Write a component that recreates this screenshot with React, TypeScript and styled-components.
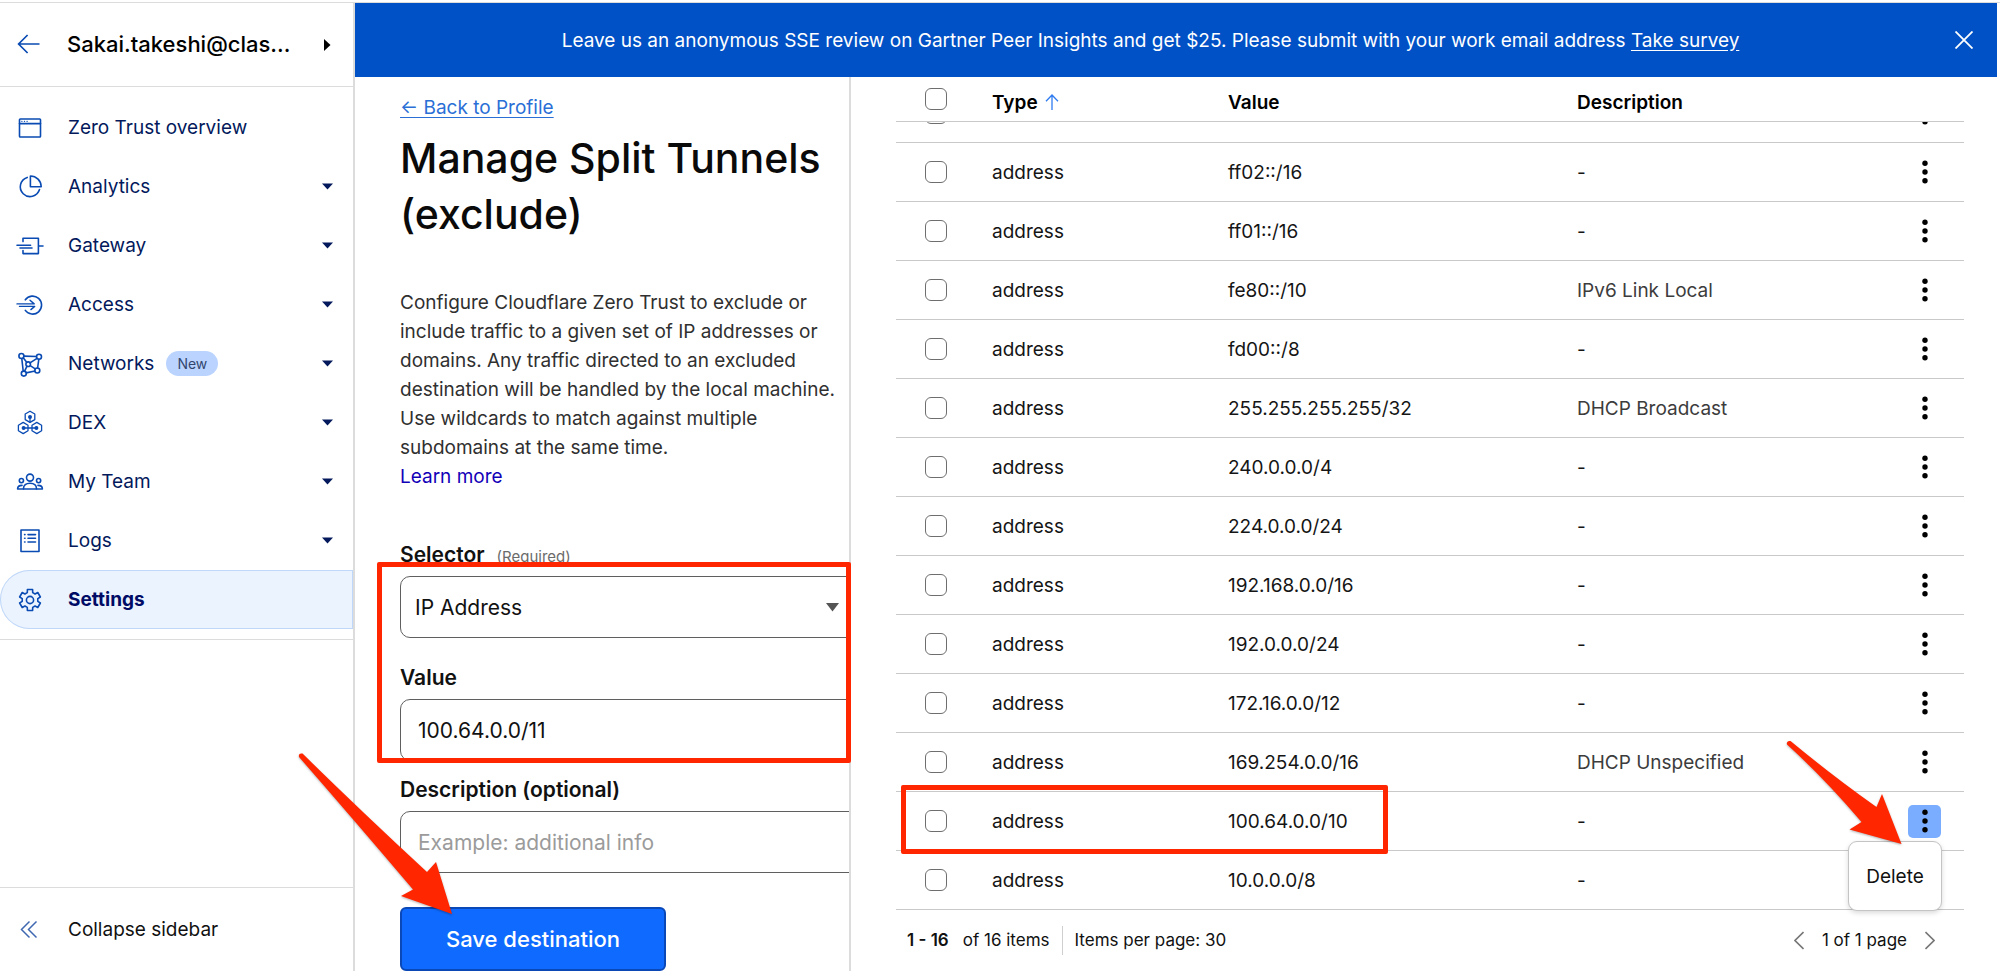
import React, { useLayoutEffect, useRef, useState } from "react";
import styled, { createGlobalStyle, css } from "styled-components";

const color = {
  line: "#c9c9c9",
  frame: "#dcdcdc",
  navy: "#03195c",
  icon: "#0a4bb3",
  banner: "#0051c6",
  action: "#0f6bff",
  mark: "#ff2600",
};

const GlobalStyle = createGlobalStyle`
  *, *::before, *::after { box-sizing: border-box; }
  html, body { margin: 0; background: #fff; }
  body, button, input, select {
    font-family: Inter, "Liberation Sans", sans-serif;
    font-size: 19px;
    line-height: 29px;
    color: #111;
  }
`;

/* ---------- shell ---------- */

const Shell = styled.div`
  display: flex;
  height: 100vh;
  overflow: hidden;
  padding-top: 2px;
`;

const Sidebar = styled.aside`
  display: flex;
  flex-direction: column;
  flex: 0 0 355px;
  border-top: 1px solid ${color.frame};
  border-right: 2px solid ${color.frame};
`;

const Main = styled.main`
  display: flex;
  flex-direction: column;
  flex: 1;
  min-width: 0;
  border-top: 1px solid ${color.frame};
`;

const Split = styled.div`
  display: grid;
  grid-template-columns: 496px minmax(0, 1fr);
  flex: 1;
  min-height: 0;
`;

/* ---------- sidebar ---------- */

const AccountBar = styled.header`
  display: flex;
  align-items: center;
  height: 84px;
  padding: 0 22px 0 17px;
  border-bottom: 1px solid ${color.frame};
`;

const IconButton = styled.button`
  display: flex;
  align-items: center;
  justify-content: center;
  padding: 0;
  border: 0;
  background: none;
  cursor: pointer;
`;

const AccountName = styled.button`
  display: flex;
  align-items: center;
  justify-content: space-between;
  flex: 1;
  margin-left: 24px;
  padding: 0;
  border: 0;
  background: none;
  font-size: 22px;
  font-weight: 500;
  text-align: left;
  color: #000;
`;

const NavList = styled.nav`
  display: flex;
  flex-direction: column;
  padding: 11px 0 10px;
  border-bottom: 1px solid ${color.frame};
`;

const NavLink = styled.a<{ $active?: boolean }>`
  display: flex;
  align-items: center;
  height: 59px;
  padding: 0 20px 0 17px;
  color: ${color.navy};
  text-decoration: none;
  ${(p) =>
    p.$active &&
    css`
      font-weight: 700;
      color: #000b66;
      background: #ebf3fe;
      border-radius: 30px 0 0 30px;
      box-shadow: inset 0 0 0 1px #bfd7f8;
    `}
`;

const NavText = styled.span`
  margin-left: 25px;
`;

const Badge = styled.span`
  margin-left: 12px;
  padding: 0 11px;
  border-radius: 13px;
  background: #bad4ff;
  color: #33466e;
  font-size: 14px;
  line-height: 25px;
`;

const CaretSlot = styled.span`
  display: flex;
  margin-left: auto;
`;

const CollapseButton = styled.button`
  display: flex;
  align-items: center;
  height: 84px;
  margin-top: auto;
  padding: 0 17px;
  border: 0;
  border-top: 1px solid ${color.frame};
  background: none;
  text-align: left;
`;

/* ---------- banner ---------- */

const Banner = styled.div`
  display: flex;
  align-items: center;
  height: 74px;
  margin-right: 3px;
  padding-right: 15px;
  background: ${color.banner};
  color: #fff;
`;

const BannerText = styled.p`
  flex: 1;
  margin: 0;
  text-align: center;
`;

const BannerLink = styled.a`
  color: inherit;
  text-underline-offset: 3px;
`;

const CloseButton = styled(IconButton)`
  width: 36px;
  height: 36px;
`;

/* ---------- form column ---------- */

const FormColumn = styled.section`
  position: relative;
  min-width: 0;
  min-height: 0;
  border-right: 2px solid ${color.frame};
`;

const FormScroll = styled.div`
  height: 100%;
  overflow: hidden;
  padding: 16px 0 0 45px;
`;

const BackLink = styled.a`
  display: inline-block;
  color: #2a6fd6;
  text-underline-offset: 3px;
`;

const Title = styled.h1`
  margin: 8px 0 0;
  font-size: 41px;
  font-weight: 500;
  line-height: 56px;
  color: #0a0a0a;
`;

const Intro = styled.p`
  margin: 46px 0 0;
  color: #303030;
`;

const LearnMore = styled.a`
  display: block;
  color: #1200b8;
  text-decoration: none;
`;

const Form = styled.form`
  display: flex;
  flex-direction: column;
  align-items: flex-start;
  padding-top: 49px;
`;

const Field = styled.div<{ $gap: number }>`
  width: calc(100% + 24px);
  margin-bottom: ${(p) => p.$gap}px;
`;

const Label = styled.label`
  display: block;
  margin-bottom: 6px;
  font-size: 21px;
  font-weight: 600;
  line-height: 30px;
`;

const Required = styled.span`
  margin-left: 12px;
  font-size: 15px;
  font-weight: 400;
  line-height: 20px;
  color: #6b6b6b;
`;

const controlLook = css`
  display: block;
  width: 100%;
  height: 62px;
  border: 1px solid #5f5f5f;
  border-radius: 10px;
  background: #fff;
  font-size: 21px;
`;

const TextInput = styled.input`
  ${controlLook}
  padding: 0 17px;
  &::placeholder {
    color: #9b9b9b;
    opacity: 1;
  }
`;

const SelectWrap = styled.div`
  position: relative;
`;

const Select = styled.select`
  ${controlLook}
  appearance: none;
  padding: 0 14px;
`;

const SelectCaret = styled.svg`
  position: absolute;
  top: 27px;
  right: 34px;
  pointer-events: none;
`;

const SaveButton = styled.button`
  height: 64px;
  padding: 0 44px;
  border: 2px solid #0a48b8;
  border-radius: 6px;
  background: ${color.action};
  color: #fff;
  font-size: 22px;
  font-weight: 500;
`;

/* ---------- table pane ---------- */

const TablePane = styled.section`
  position: relative;
  display: flex;
  flex-direction: column;
  min-width: 0;
  min-height: 0;
  padding: 0 36px 0 45px;
`;

const Table = styled.table`
  display: flex;
  flex-direction: column;
  flex: 1;
  min-height: 0;
`;

const TableHead = styled.thead`
  display: block;
`;

const TableBody = styled.tbody`
  display: block;
  flex: 1;
  min-height: 0;
  overflow-y: auto;
  scrollbar-width: none;
`;

const Row = styled.tr`
  display: grid;
  grid-template-columns: 96px 236fr 349fr 307fr 80px;
  height: 59px;
  border-bottom: 1px solid ${color.line};
`;

const HeadRow = styled(Row)`
  height: 45px;
`;

const HeadCell = styled.th`
  display: flex;
  align-items: center;
  gap: 7px;
  padding: 6px 0 0;
  font-weight: 600;
  color: #000;
`;

const HeadCheckCell = styled(HeadCell)`
  padding: 0;
`;

const Cell = styled.td<{ $soft?: boolean }>`
  display: flex;
  align-items: center;
  padding: 0;
  color: ${(p) => (p.$soft ? "#3c3c3c" : "#151515")};
`;

const Checkbox = styled.input`
  appearance: none;
  display: block;
  width: 22px;
  height: 22px;
  margin: 0 0 0 29px;
  border: 1px solid #6e6e6e;
  border-radius: 6px;
  background: #fff;
`;

const KebabButton = styled(IconButton)<{ $open: boolean }>`
  width: 33px;
  height: 33px;
  margin-left: 24px;
  border-radius: 5px;
  background: ${(p) => (p.$open ? "#7aadff" : "none")};
`;

const Menu = styled.div`
  position: absolute;
  right: 58px;
  bottom: 60px;
  z-index: 2;
  display: flex;
  align-items: center;
  justify-content: center;
  width: 94px;
  height: 70px;
  border: 1px solid #c4c4c4;
  border-radius: 9px;
  background: #fff;
  box-shadow: 0 2px 5px rgba(0, 0, 0, 0.15);
`;

const MenuItem = styled.button`
  padding: 0;
  border: 0;
  background: none;
`;

const Footer = styled.footer`
  display: flex;
  align-items: center;
  height: 61px;
  padding: 0 29px 0 11px;
  font-size: 17px;
`;

const Range = styled.strong`
  margin-right: 14px;
  font-weight: 600;
`;

const PerPage = styled.span`
  margin-left: 12px;
  padding-left: 12px;
  border-left: 1px solid #cfcfcf;
`;

const Pager = styled.div`
  display: flex;
  align-items: center;
  gap: 18px;
  margin-left: auto;
`;

/* ---------- annotations laid over the content ---------- */

const markBox = css`
  position: absolute;
  z-index: 3;
  border: 5px solid ${color.mark};
  border-radius: 2px;
  pointer-events: none;
`;

const FieldsMark = styled.div`
  ${markBox}
  top: 485px;
  left: 22px;
  right: -2px;
  height: 201px;
`;

const RowMark = styled.div`
  ${markBox}
  left: 50px;
  bottom: 117px;
  width: 487px;
  height: 69px;
`;

const arrowLook = css`
  position: absolute;
  z-index: 4;
  overflow: visible;
  pointer-events: none;
  filter: drop-shadow(0 1px 1px rgba(0, 0, 0, 0.3));
`;

const SaveArrow = styled.svg`
  ${arrowLook}
  top: 675px;
  left: -57px;
`;

const DeleteArrow = styled.svg`
  ${arrowLook}
  right: 98px;
  bottom: 126px;
`;

/* ---------- icons ---------- */

function NavIcon({ children }: { children: React.ReactNode }) {
  return (
    <svg
      width="26"
      height="26"
      viewBox="0 0 26 26"
      fill="none"
      stroke={color.icon}
      strokeWidth="1.6"
      strokeLinecap="round"
      strokeLinejoin="round"
      overflow="visible"
      aria-hidden="true"
    >
      {children}
    </svg>
  );
}

/* Six-toothed gear centred on (13, 13). */
const gearOutline = (() => {
  const pts: string[] = [];
  const at = (deg: number, r: number) => {
    const a = (deg * Math.PI) / 180;
    pts.push(`${(13 + r * Math.sin(a)).toFixed(2)} ${(13 - r * Math.cos(a)).toFixed(2)}`);
  };
  for (let k = 0; k < 6; k++) {
    const d = k * 60;
    at(d - 20, 7.9);
    at(d - 14, 10.8);
    at(d + 14, 10.8);
    at(d + 20, 7.9);
  }
  return `M${pts.join("L")}Z`;
})();

const hexagon = (x: number, y: number) =>
  `M${x} ${y - 5.6}l4.8 2.8v5.6l-4.8 2.8l-4.8 -2.8v-5.6z`;

const icons = {
  overview: (
    <>
      <rect x="2.5" y="4" width="21" height="18" rx="0.8" />
      <path d="M2.5 8.6h21" />
      <path d="M4.8 6.3h.2M7.4 6.3h.2M10 6.3h.2" strokeWidth="1.2" />
    </>
  ),
  analytics: (
    <>
      <path d="M10.2 3.4a9.8 9.8 0 1 0 12.3 12.2" />
      <path d="M13.4 2v10.8h10.8a10.8 10.8 0 0 0-10.8-10.8z" />
    </>
  ),
  gateway: (
    <>
      <path d="M6 8.6V5.2h15.4v15.4H6v-3M21.4 13H26" />
      <path d="M0 12.3h13.6M3 15h12" />
    </>
  ),
  access: (
    <>
      <path d="M8.3 7.8a9 9 0 1 1 0 10.6" />
      <path d="M0 11.9h17.2l-4.2-3.6M2.5 14.4h15.2l-3.8 3.2" strokeWidth="1.4" />
    </>
  ),
  networks: (
    <>
      <path d="M7 5.1l12.4.4M4.8 7.6l1.4 12.4M21.8 8.3l-1.2 8.6M18 20l-8.8 1.9M6.4 7l3.3 4.2M20 7.3l-7 4.6M13.2 14.6l5 3.2M10 15.1l-2.4 5.1" />
      <circle cx="4.4" cy="5" r="2.5" />
      <circle cx="22" cy="5.7" r="2.5" />
      <circle cx="11.2" cy="13.2" r="2.3" />
      <circle cx="20.3" cy="19.5" r="2.5" />
      <circle cx="6.8" cy="22.6" r="2.5" />
    </>
  ),
  dex: (
    <>
      <path d={hexagon(13, 6.8)} strokeWidth="1.3" />
      <path d={hexagon(6.2, 18)} strokeWidth="1.3" />
      <path d={hexagon(19.8, 18)} strokeWidth="1.3" />
      <path d="M6.2 18h13.6M13 7v5" strokeWidth="1.3" />
      <circle cx="13" cy="7" r="1.2" fill={color.icon} />
      <circle cx="6.6" cy="18" r="1.2" fill={color.icon} />
      <circle cx="19.4" cy="18" r="1.2" fill={color.icon} />
    </>
  ),
  team: (
    <>
      <circle cx="13" cy="8.6" r="3.5" />
      <circle cx="4.4" cy="11.6" r="2.1" />
      <circle cx="21.6" cy="11.6" r="2.1" />
      <path d="M6.4 20c0-4 2.6-5.8 6.6-5.8s6.6 1.8 6.6 5.8z" />
      <path d="M5 16.4c-3 0-4.4 1-4.4 3.6h5.8M21 16.4c3 0 4.4 1 4.4 3.6h-5.8" />
    </>
  ),
  logs: (
    <>
      <rect x="4" y="2" width="18" height="21.5" />
      <path d="M11 6.6h7.5M11 10.3h7.5M11 14h7.5M7.6 6.6h.4M7.6 10.3h.4M7.6 14h.4" />
    </>
  ),
  settings: (
    <>
      <path d={gearOutline} />
      <circle cx="13" cy="13" r="3.6" />
    </>
  ),
};

function DownCaret() {
  return (
    <svg width="11" height="7" viewBox="0 0 11 7" aria-hidden="true">
      <path d="M0 .5h11L5.5 6.5z" fill={color.navy} />
    </svg>
  );
}

function Kebab() {
  return (
    <svg width="6" height="24" viewBox="0 0 6 24" aria-hidden="true">
      <circle cx="3" cy="3.2" r="2.7" />
      <circle cx="3" cy="12" r="2.7" />
      <circle cx="3" cy="20.8" r="2.7" />
    </svg>
  );
}

function Chevron({ d }: { d: string }) {
  return (
    <svg width="10" height="19" viewBox="0 0 10 19" fill="none" stroke="#777" strokeWidth="1.6" aria-hidden="true">
      <path d={d} />
    </svg>
  );
}

/* ---------- data ---------- */

const navItems: { id: keyof typeof icons; label: string; badge?: string; caret?: boolean; active?: boolean }[] = [
  { id: "overview", label: "Zero Trust overview" },
  { id: "analytics", label: "Analytics", caret: true },
  { id: "gateway", label: "Gateway", caret: true },
  { id: "access", label: "Access", caret: true },
  { id: "networks", label: "Networks", badge: "New", caret: true },
  { id: "dex", label: "DEX", caret: true },
  { id: "team", label: "My Team", caret: true },
  { id: "logs", label: "Logs", caret: true },
  { id: "settings", label: "Settings", active: true },
];

const destinations: { value: string; description?: string }[] = [
  { value: "ff05::/16" },
  { value: "ff02::/16" },
  { value: "ff01::/16" },
  { value: "fe80::/10", description: "IPv6 Link Local" },
  { value: "fd00::/8" },
  { value: "255.255.255.255/32", description: "DHCP Broadcast" },
  { value: "240.0.0.0/4" },
  { value: "224.0.0.0/24" },
  { value: "192.168.0.0/16" },
  { value: "192.0.0.0/24" },
  { value: "172.16.0.0/12" },
  { value: "169.254.0.0/16", description: "DHCP Unspecified" },
  { value: "100.64.0.0/10" },
  { value: "10.0.0.0/8" },
];

/* ---------- sections ---------- */

function SideNavigation() {
  return (
    <Sidebar>
      <AccountBar>
        <IconButton aria-label="Back">
          <svg width="26" height="26" viewBox="0 0 26 26" fill="none" stroke={color.icon} strokeWidth="1.7">
            <path d="M22.5 12H1.8M10.6 3L1.6 12l9 9" />
          </svg>
        </IconButton>
        <AccountName>
          Sakai.takeshi@clas...
          <svg width="7" height="12" viewBox="0 0 7 12" aria-hidden="true">
            <path d="M0 0l6.5 6L0 12z" />
          </svg>
        </AccountName>
      </AccountBar>
      <NavList>
        {navItems.map((item) => (
          <NavLink key={item.id} href="#" $active={item.active}>
            <NavIcon>{icons[item.id]}</NavIcon>
            <NavText>{item.label}</NavText>
            {item.badge && <Badge>{item.badge}</Badge>}
            {item.caret && (
              <CaretSlot>
                <DownCaret />
              </CaretSlot>
            )}
          </NavLink>
        ))}
      </NavList>
      <CollapseButton>
        <svg width="26" height="26" viewBox="0 0 26 26" fill="none" stroke="#3f68b0" strokeWidth="1.5" aria-hidden="true">
          <path d="M12.5 4.5L4.5 12.5l8 8M19.5 4.5L11.5 12.5l8 8" />
        </svg>
        <NavText>Collapse sidebar</NavText>
      </CollapseButton>
    </Sidebar>
  );
}

function SurveyBanner() {
  return (
    <Banner>
      <BannerText>
        Leave us an anonymous SSE review on Gartner Peer Insights and get $25. Please submit with your work email
        address <BannerLink href="#">Take survey</BannerLink>
      </BannerText>
      <CloseButton aria-label="Close">
        <svg width="18" height="18" viewBox="0 0 18 18" fill="none" stroke="#fff" strokeWidth="1.8">
          <path d="M.5.5l17 17M17.5.5l-17 17" />
        </svg>
      </CloseButton>
    </Banner>
  );
}

function DestinationForm() {
  const [value, setValue] = useState("100.64.0.0/11");
  return (
    <FormColumn>
      <FormScroll>
        <BackLink href="#">← Back to Profile</BackLink>
        <Title>Manage Split Tunnels (exclude)</Title>
        <Intro>
          Configure Cloudflare Zero Trust to exclude or include traffic to a given set of IP addresses or domains. Any
          traffic directed to an excluded destination will be handled by the local machine. Use wildcards to match
          against multiple subdomains at the same time.
          <LearnMore href="#">Learn more</LearnMore>
        </Intro>
        <Form onSubmit={(e) => e.preventDefault()}>
          <Field $gap={25}>
            <Label htmlFor="selector">
              Selector<Required>(Required)</Required>
            </Label>
            <SelectWrap>
              <Select id="selector">
                <option>IP Address</option>
              </Select>
              <SelectCaret width="13" height="9" viewBox="0 0 13 9" aria-hidden="true">
                <path d="M0 0h13L6.5 8.5z" fill="#555" />
              </SelectCaret>
            </SelectWrap>
          </Field>
          <Field $gap={14}>
            <Label htmlFor="value">Value</Label>
            <TextInput id="value" value={value} onChange={(e) => setValue(e.target.value)} />
          </Field>
          <Field $gap={34}>
            <Label htmlFor="description">Description (optional)</Label>
            <TextInput id="description" placeholder="Example: additional info" />
          </Field>
          <SaveButton type="submit">Save destination</SaveButton>
        </Form>
      </FormScroll>
      <FieldsMark />
      <SaveArrow width="156" height="164" viewBox="0 0 156 164" aria-hidden="true">
        <path
          d="M.8 3.8Q1 .8 4.5 1.6Q64 60 129 120L138 110L154 162L103 144L115 137.5Q56 68 1 5Z"
          fill={color.mark}
        />
      </SaveArrow>
    </FormColumn>
  );
}

function DestinationTable() {
  const body = useRef<HTMLTableSectionElement>(null);
  const openRow = "100.64.0.0/10";

  useLayoutEffect(() => {
    const el = body.current;
    if (el) el.scrollTop = el.scrollHeight;
  }, []);

  return (
    <TablePane>
      <Table>
        <TableHead>
          <HeadRow>
            <HeadCheckCell>
              <Checkbox type="checkbox" aria-label="Select all" />
            </HeadCheckCell>
            <HeadCell>
              Type
              <svg
                width="14"
                height="16"
                viewBox="0 0 14 16"
                fill="none"
                stroke="#2f7bf0"
                strokeWidth="1.3"
                aria-hidden="true"
              >
                <path d="M7 16V1M1 7.2L7 1l6 6.2" />
              </svg>
            </HeadCell>
            <HeadCell>Value</HeadCell>
            <HeadCell>Description</HeadCell>
            <HeadCell />
          </HeadRow>
        </TableHead>
        <TableBody ref={body}>
          {destinations.map((row) => (
            <Row key={row.value}>
              <Cell>
                <Checkbox type="checkbox" aria-label={`Select ${row.value}`} />
              </Cell>
              <Cell>address</Cell>
              <Cell>{row.value}</Cell>
              <Cell $soft={Boolean(row.description)}>{row.description ?? "-"}</Cell>
              <Cell>
                <KebabButton $open={row.value === openRow} aria-label={`Actions for ${row.value}`}>
                  <Kebab />
                </KebabButton>
              </Cell>
            </Row>
          ))}
        </TableBody>
      </Table>
      <Footer>
        <Range>1 - 16</Range>
        <span>of 16 items</span>
        <PerPage>Items per page: 30</PerPage>
        <Pager>
          <IconButton aria-label="Previous page">
            <Chevron d="M9.5 1L1 9.5l8.5 8.5" />
          </IconButton>
          <span>1 of 1 page</span>
          <IconButton aria-label="Next page">
            <Chevron d="M.5 1L9 9.5L.5 18" />
          </IconButton>
        </Pager>
      </Footer>
      <Menu>
        <MenuItem>Delete</MenuItem>
      </Menu>
      <RowMark />
      <DeleteArrow width="116" height="105" viewBox="0 0 116 105" aria-hidden="true">
        <path
          d="M.8 3.6Q1 .4 4.5 1Q48 37 90.500 67L96 54L115.500 104L63.500 89.500L75.500 82Q38 38 1 4.500Z"
          fill={color.mark}
        />
      </DeleteArrow>
    </TablePane>
  );
}

export default function App() {
  return (
    <>
      <GlobalStyle />
      <Shell>
        <SideNavigation />
        <Main>
          <SurveyBanner />
          <Split>
            <DestinationForm />
            <DestinationTable />
          </Split>
        </Main>
      </Shell>
    </>
  );
}
